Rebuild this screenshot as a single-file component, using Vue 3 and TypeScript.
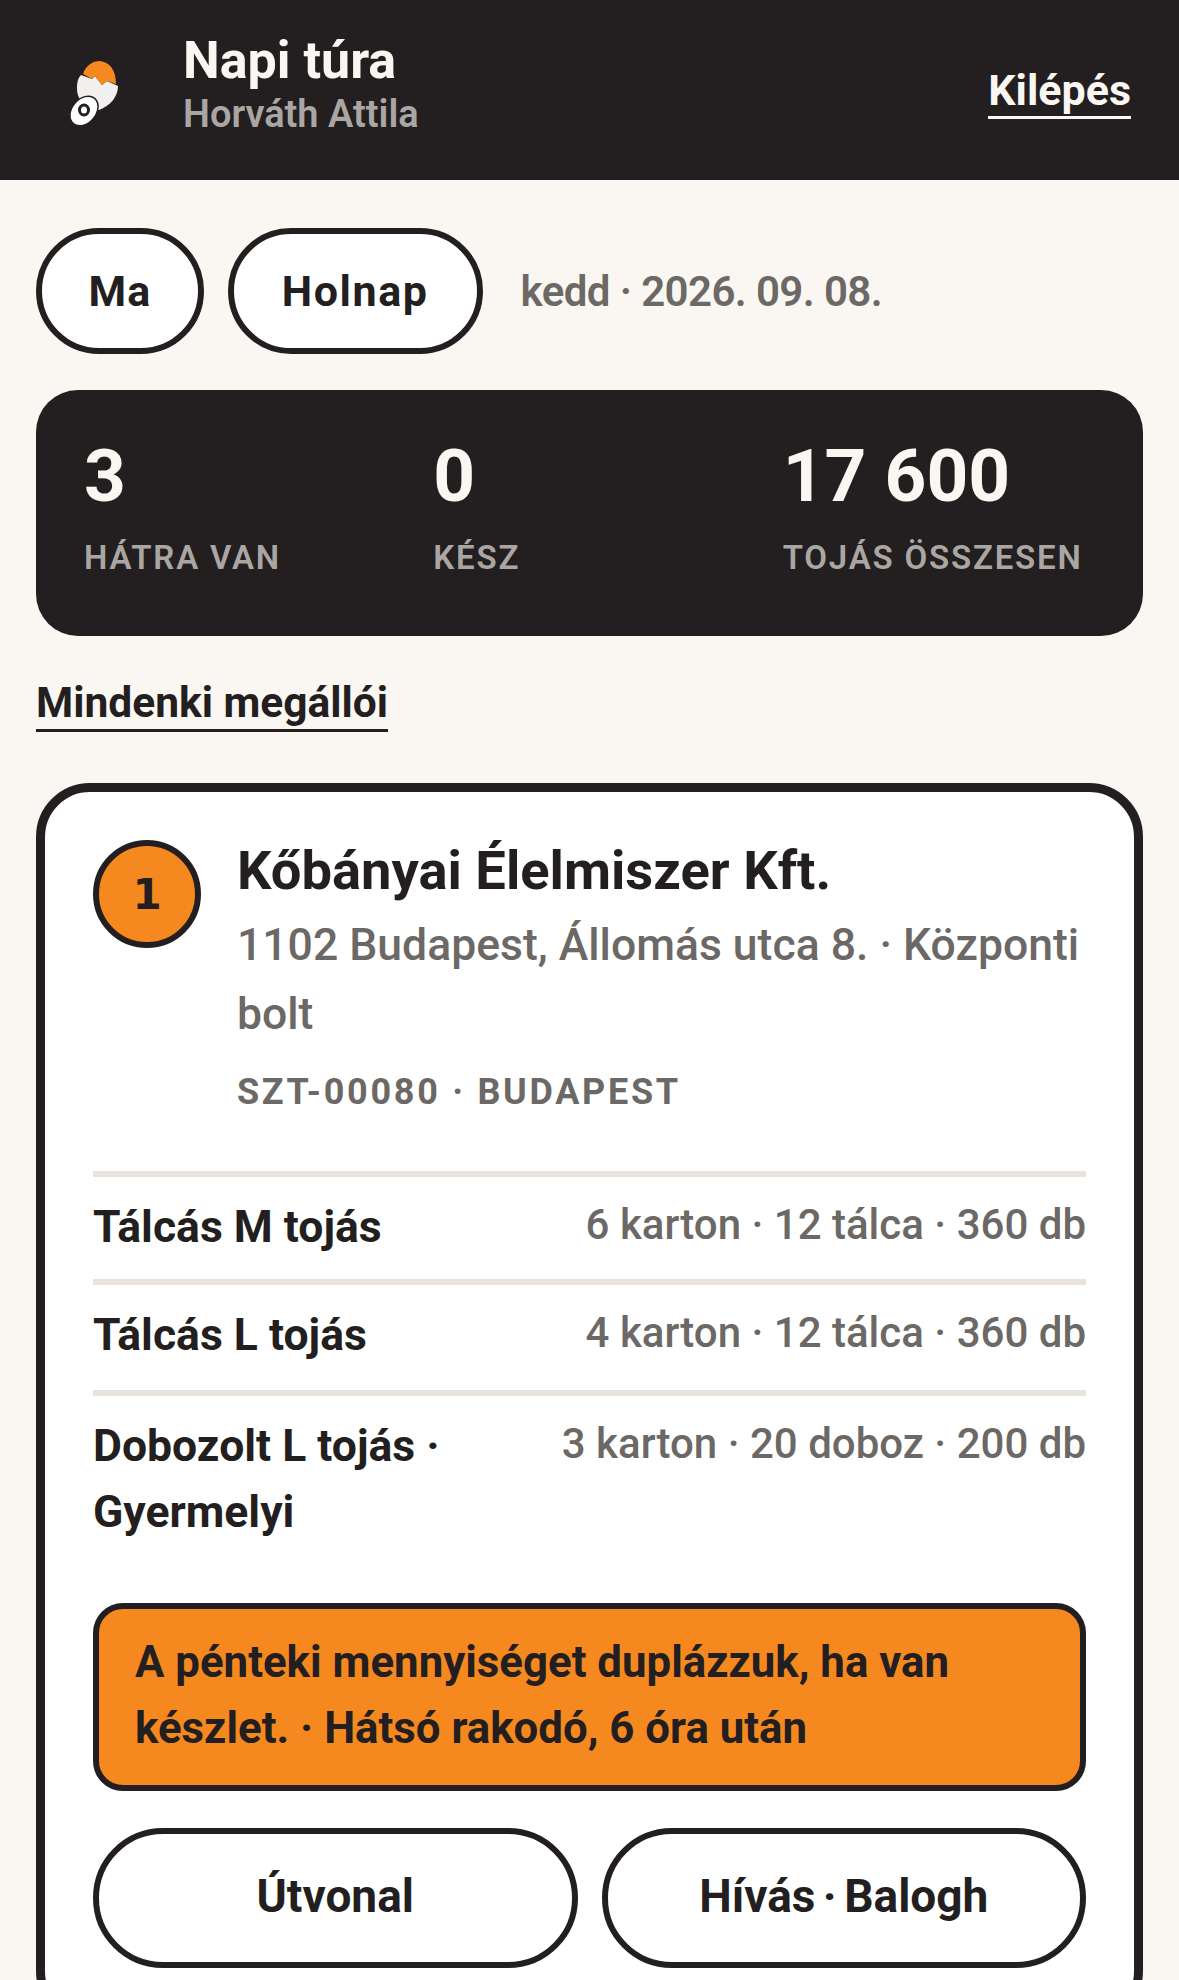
<template>
  <div class="app">
    <header class="topbar">
      <svg class="logo" viewBox="58 52 72 72" width="72" height="72">
        <path d="M77 87C77 80 78 76 81 73L92 77L95 74L102 83L107 79L118 84C118 95 110 104 99 108C88 108 77 99 77 87Z" fill="#f2f0ee" />
        <path d="M83 72C86 63 93 59 100 59C109 60 116 67 116 82L107 79L102 83L95 74L92 77Z" fill="#f5881f" />
        <ellipse cx="84" cy="109" rx="12" ry="16.5" transform="rotate(40 84 109)" fill="#fff" stroke="#231f20" stroke-width="1.5" />
        <ellipse cx="84" cy="108" rx="4.5" ry="5" fill="#fff" stroke="#231f20" stroke-width="3" />
      </svg>
      <div class="who">
        <div class="title">Napi túra</div>
        <div class="driver">Horváth Attila</div>
      </div>
      <a class="logout">Kilépés</a>
    </header>

    <main class="page">
      <div class="day-row">
        <button class="pill">Ma</button>
        <button class="pill wide">Holnap</button>
        <span class="date">kedd · 2026. 09. 08.</span>
      </div>

      <section class="stats">
        <div v-for="s in stats" :key="s.label" class="stat">
          <div class="stat-value">{{ s.value }}</div>
          <div class="stat-label">{{ s.label }}</div>
        </div>
      </section>

      <div class="all-row"><a class="all-link">Mindenki megállói</a></div>

      <article class="stop">
        <div class="stop-head">
          <div class="badge">1</div>
          <div class="stop-info">
            <h2>Kőbányai Élelmiszer Kft.</h2>
            <p class="addr">1102 Budapest, Állomás utca 8. · Központi bolt</p>
            <p class="code">SZT-00080 · BUDAPEST</p>
          </div>
        </div>

        <div v-for="item in items" :key="item.name" class="item">
          <div class="item-name">{{ item.name }}</div>
          <div class="item-qty">{{ item.qty }}</div>
        </div>

        <div class="note">A pénteki mennyiséget duplázzuk, ha van készlet. · Hátsó rakodó, 6 óra után</div>

        <div class="actions">
          <button class="action">Útvonal</button>
          <button class="action">Hívás · Balogh</button>
        </div>
      </article>
    </main>
  </div>
</template>

<script setup lang="ts">
const stats = [
  { value: '3', label: 'HÁTRA VAN' },
  { value: '0', label: 'KÉSZ' },
  { value: '17 600', label: 'TOJÁS ÖSSZESEN' },
];

const items = [
  { name: 'Tálcás M tojás', qty: '6 karton · 12 tálca · 360 db' },
  { name: 'Tálcás L tojás', qty: '4 karton · 12 tálca · 360 db' },
  { name: 'Dobozolt L tojás · Gyermelyi', qty: '3 karton · 20 doboz · 200 db' },
];
</script>

<style>
html, body { margin: 0; background: #faf7f2; }
</style>

<style scoped>
.app {
  height: 1980px;
  overflow: hidden;
  background: #faf7f2;
  color: #231f20;
  font-family: Roboto, "Noto Sans", sans-serif;
}
.topbar {
  height: 180px;
  box-sizing: border-box;
  background: #231f20;
  display: flex;
  align-items: center;
  padding: 0 48px 0 58px;
  gap: 53px;
}
.logo { flex: none; }
.who { flex: 1; padding-bottom: 11px; }
.title { font-size: 52px; font-weight: 700; color: #faf7f2; line-height: 60px; }
.driver { font-size: 38px; font-weight: 600; color: #aaa6a3; line-height: 47px; }
.logout { font-size: 43px; font-weight: 700; color: #faf7f2; border-bottom: 3px solid #faf7f2; line-height: 52px; margin-top: 3px; }

.page { padding: 48px 36px 0; }
.day-row { display: flex; align-items: center; gap: 24px; }
.pill {
  height: 126px;
  box-sizing: border-box;
  padding: 0 46.5px;
  border: 6px solid #231f20;
  border-radius: 63px;
  background: #fff;
  color: #231f20;
  font: inherit;
  font-size: 43px;
  letter-spacing: 1px;
  font-weight: 700;
}
.pill.wide { padding: 0 48px; letter-spacing: 1.6px; }
.date { margin-left: 14px; font-size: 42px; font-weight: 600; letter-spacing: -0.6px; color: #6b6865; }

.stats {
  margin-top: 36px;
  height: 246px;
  box-sizing: border-box;
  padding: 44px 48px;
  background: #231f20;
  border-radius: 42px;
  display: grid;
  grid-template-columns: repeat(3, 1fr);
  gap: 37px;
}
.stat-value { font-size: 73px; font-weight: 700; line-height: 84px; color: #faf7f2; }
.stat-label { margin-top: 16px; font-size: 33px; font-weight: 600; letter-spacing: 1.8px; line-height: 48px; color: #aaa6a3; white-space: nowrap; }

.all-row { margin-top: 40px; line-height: 54px; }
.all-link { font-size: 42.5px; font-weight: 700; border-bottom: 3px solid #231f20; padding-bottom: 2px; }

.stop {
  margin-top: 44px;
  padding: 48px;
  border: 9px solid #231f20;
  border-radius: 54px;
  background: #fff;
}
.stop-head { display: flex; gap: 36px; padding-bottom: 55px; }
.badge {
  flex: none;
  width: 108px;
  height: 108px;
  box-sizing: border-box;
  border: 6px solid #231f20;
  border-radius: 50%;
  background: #f5881f;
  display: flex;
  align-items: center;
  justify-content: center;
  font-family: "DejaVu Sans", sans-serif;
  font-size: 42px;
  font-weight: 700;
}
h2 { margin: -2px 0 0; font-size: 54.3px; font-weight: 700; line-height: 66px; }
.addr { margin: 7px 0 0; font-size: 44.5px; font-weight: 500; line-height: 69px; color: #6b6865; }
.code { margin: 19px 0 0; font-size: 36px; font-weight: 700; letter-spacing: 2.7px; line-height: 48px; color: #6b6865; }

.item {
  display: flex;
  justify-content: space-between;
  gap: 36px;
  padding: 17px 0 19px;
  border-top: 6px solid #e8e3dc;
}
.item + .item { padding-bottom: 22px; }
.item-name { font-size: 44.5px; font-weight: 700; line-height: 66px; }
.item-qty { flex: none; font-size: 42px; font-weight: 500; line-height: 62px; color: #6b6865; }

.note {
  margin-top: 36px;
  padding: 20px 36px 24px;
  border: 6px solid #231f20;
  border-radius: 30px;
  background: #f5881f;
  font-size: 43.8px;
  font-weight: 700;
  line-height: 66px;
}
.actions { margin-top: 37px; display: grid; grid-template-columns: 1fr 1fr; gap: 24px; }
.action {
  height: 140px;
  padding: 0 0 4px;
  border: 6px solid #231f20;
  border-radius: 70px;
  background: #fff;
  color: #231f20;
  font: inherit;
  font-size: 46px;
  font-weight: 700;
  word-spacing: -4px;
}
</style>
